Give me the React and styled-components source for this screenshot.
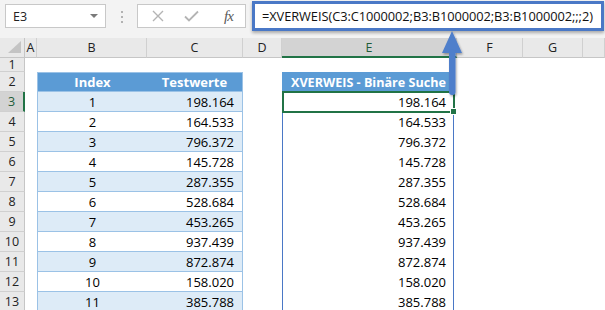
import React from 'react';
import styled, { createGlobalStyle } from 'styled-components';

const GlobalStyle = createGlobalStyle`
    html, body {
        margin: 0;
        padding: 0;
        background: #ffffff;
    }
`;

const columns = ['A', 'B', 'C', 'D', 'E', 'F', 'G', ''];

const data = [
    ['1', '198.164'],
    ['2', '164.533'],
    ['3', '796.372'],
    ['4', '145.728'],
    ['5', '287.355'],
    ['6', '528.684'],
    ['7', '453.265'],
    ['8', '937.439'],
    ['9', '872.874'],
    ['10', '158.020'],
    ['11', '385.788'],
];

export default function App() {
    return (
        <Page>
            <GlobalStyle />
            <TopBar>
                <NameBox>
                    <span>E3</span>
                    <DropTriangle />
                </NameBox>
                <Grip>
                    <i /><i /><i />
                </Grip>
                <ButtonBox>
                    <IconSlot offset={14}>
                        <svg width="12" height="12" viewBox="0 0 12 12">
                            <path d="M1 1 L11 11 M11 1 L1 11" stroke="#b4b4b4" strokeWidth="1.4" fill="none" />
                        </svg>
                    </IconSlot>
                    <IconSlot offset={20}>
                        <svg width="15" height="12" viewBox="0 0 15 12">
                            <path d="M1 6.5 L5 10.5 L14 1.5" stroke="#b4b4b4" strokeWidth="1.8" fill="none" />
                        </svg>
                    </IconSlot>
                    <Fx>fx</Fx>
                </ButtonBox>
                <FormulaBox>=XVERWEIS(C3:C1000002;B3:B1000002;B3:B1000002;;;2)</FormulaBox>
            </TopBar>

            <Sheet>
                <Corner>
                    <svg width="14" height="13" viewBox="0 0 14 13">
                        <polygon points="0,12 13,12 13,0" fill="#c4c4c4" />
                    </svg>
                </Corner>
                {columns.map((c, i) => (
                    <ColHead key={i} selected={c === 'E'}>{c}</ColHead>
                ))}

                <RowHead>1</RowHead>
                {columns.map((c, i) => <Cell key={i} />)}

                <RowHead>2</RowHead>
                <Cell />
                <TableCell header align="center">Index</TableCell>
                <TableCell header align="center" last>Testwerte</TableCell>
                <Cell />
                <Cell><ResultHeader>XVERWEIS - Binäre Suche</ResultHeader></Cell>
                <Cell />
                <Cell />
                <Cell />

                {data.map(([idx, val], r) => (
                    <React.Fragment key={idx}>
                        <RowHead selected={r === 0}>{r + 3}</RowHead>
                        <Cell />
                        <TableCell stripe={r % 2 === 0} align="center">{idx}</TableCell>
                        <TableCell stripe={r % 2 === 0} align="right" last>{val}</TableCell>
                        <Cell />
                        <Cell>
                            {r === 0 ? (
                                <ActiveCell>
                                    {val}
                                    <FillHandle />
                                </ActiveCell>
                            ) : (
                                <ResultCell>{val}</ResultCell>
                            )}
                        </Cell>
                        <Cell />
                        <Cell />
                        <Cell />
                    </React.Fragment>
                ))}
            </Sheet>

            <Arrow width="30" height="72" viewBox="0 0 30 72">
                <defs>
                    <filter id="sh" x="-50%" y="-20%" width="200%" height="150%">
                        <feDropShadow dx="1" dy="1.5" stdDeviation="1.2" floodColor="#000" floodOpacity="0.35" />
                    </filter>
                </defs>
                <g filter="url(#sh)">
                    <polygon points="12,2 2,24 22,24" fill="#4f7fcb" />
                    <rect x="9" y="20" width="6.5" height="46" rx="3" fill="#4f7fcb" />
                </g>
            </Arrow>
        </Page>
    );
}

const Page = styled.div`
    position: relative;
    width: 605px;
    height: 310px;
    overflow: hidden;
    background: #ffffff;
    font-family: "Open Sans", "Noto Sans", sans-serif;
    color: #000000;
`;

const TopBar = styled.div`
    display: flex;
    align-items: flex-start;
    height: 38px;
    padding-left: 5px;
    box-sizing: border-box;
    background: #f3f3f3;
`;

const NameBox = styled.div`
    display: flex;
    align-items: center;
    justify-content: space-between;
    width: 101px;
    height: 24px;
    margin-top: 4px;
    padding: 0 7px 0 7px;
    box-sizing: border-box;
    background: #ffffff;
    border: 1px solid #c8c8c8;
    font-size: 12.5px;
    color: #222;
`;

const DropTriangle = styled.span`
    width: 0;
    height: 0;
    border-left: 4px solid transparent;
    border-right: 4px solid transparent;
    border-top: 4px solid #7a7a7a;
`;

const Grip = styled.div`
    display: flex;
    flex-direction: column;
    gap: 3px;
    margin: 11px 14px 0 15px;

    i {
        display: block;
        width: 2px;
        height: 2px;
        background: #b2b2b2;
    }
`;

const ButtonBox = styled.div`
    display: flex;
    align-items: center;
    width: 109px;
    height: 24px;
    margin-top: 4px;
    box-sizing: border-box;
    background: #ffffff;
    border: 1px solid #c8c8c8;
`;

const IconSlot = styled.span`
    display: flex;
    margin-left: ${p => p.offset}px;
`;

const Fx = styled.span`
    margin-left: 25px;
    font-family: "Liberation Serif", serif;
    font-style: italic;
    font-size: 15px;
    color: #5a5a5a;
    letter-spacing: -1px;
`;

const FormulaBox = styled.div`
    flex: 1;
    display: flex;
    align-items: center;
    height: 30px;
    margin: 1px 1px 0 6px;
    padding-left: 7px;
    box-sizing: border-box;
    background: #ffffff;
    border: 3px solid #4a78c6;
    box-shadow: 0 2px 3px rgba(0, 0, 0, 0.3);
    font-size: 12.8px;
    letter-spacing: -0.05px;
    color: #111;
    white-space: nowrap;
`;

const Sheet = styled.div`
    display: grid;
    grid-template-columns: 25px 12px 110px 96px 39px 175px 66px 60px 1fr;
    grid-template-rows: 20px 14px repeat(12, 20px);
    font-size: 13px;
`;

const Corner = styled.div`
    display: flex;
    align-items: flex-end;
    justify-content: flex-end;
    padding: 0 2px 3px 0;
    background: #e9e9e9;
    border-right: 1px solid #c6c6c6;
    border-bottom: 1px solid #c6c6c6;
`;

const ColHead = styled.div`
    display: flex;
    align-items: center;
    justify-content: center;
    box-sizing: border-box;
    background: ${p => (p.selected ? '#d3d3d3' : '#e9e9e9')};
    border-right: 1px solid #d0d0d0;
    border-bottom: ${p => (p.selected ? '2px solid #217346' : '1px solid #c6c6c6')};
    font-size: 12.5px;
    color: ${p => (p.selected ? '#1f5c38' : '#222')};
`;

const RowHead = styled.div`
    display: flex;
    align-items: center;
    justify-content: center;
    box-sizing: border-box;
    background: ${p => (p.selected ? '#d3d3d3' : '#e9e9e9')};
    border-right: ${p => (p.selected ? '2px solid #217346' : '1px solid #c6c6c6')};
    border-bottom: 1px solid #d0d0d0;
    font-size: 12.5px;
    color: ${p => (p.selected ? '#1f5c38' : '#222')};
`;

const Cell = styled.div`
    display: flex;
    min-width: 0;
`;

const TableCell = styled.div`
    display: flex;
    align-items: center;
    justify-content: ${p => (p.align === 'right' ? 'flex-end' : 'center')};
    padding-right: ${p => (p.align === 'right' ? '8px' : '0')};
    box-sizing: border-box;
    background: ${p => (p.header ? '#5b9bd5' : p.stripe ? '#ddebf7' : '#ffffff')};
    color: ${p => (p.header ? '#ffffff' : '#000000')};
    font-weight: ${p => (p.header ? 700 : 400)};
    border-bottom: 1px solid #9bc2e6;
    border-top: ${p => (p.header ? '1px solid #9bc2e6' : '0')};
    border-left: ${p => (p.last ? '0' : '1px solid #9bc2e6')};
    border-right: ${p => (p.last ? '1px solid #9bc2e6' : '0')};
`;

const ResultHeader = styled.div`
    flex: 1;
    display: flex;
    align-items: center;
    justify-content: center;
    margin-right: 2px;
    background: #5b9bd5;
    color: #ffffff;
    font-weight: 700;
    font-size: 12.6px;
`;

const ActiveCell = styled.div`
    position: relative;
    flex: 1;
    display: flex;
    align-items: center;
    justify-content: flex-end;
    margin: -1px 2px -1px 0;
    padding-right: 7px;
    border: 2px solid #217346;
`;

const FillHandle = styled.span`
    position: absolute;
    right: -4px;
    bottom: -4px;
    width: 5px;
    height: 5px;
    background: #217346;
    border: 1px solid #ffffff;
`;

const ResultCell = styled.div`
    flex: 1;
    display: flex;
    align-items: center;
    justify-content: flex-end;
    margin-right: 3px;
    padding-right: 7px;
    border-left: 1px solid #4a78c6;
    border-right: 1px solid #4a78c6;
`;

const Arrow = styled.svg`
    position: absolute;
    left: 440px;
    top: 29px;
`;
